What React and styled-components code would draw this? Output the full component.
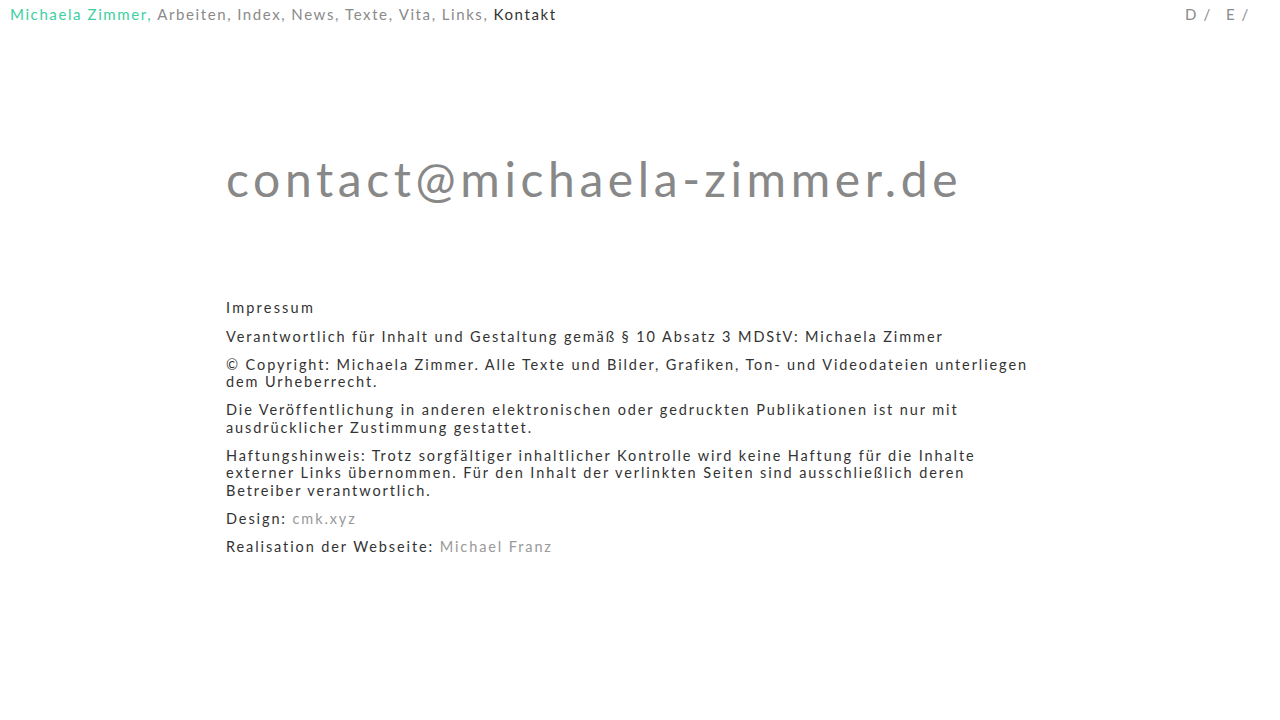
import React from 'react';
import styled, { createGlobalStyle } from 'styled-components';

const GlobalStyle = createGlobalStyle`
  html, body {
    margin: 0;
    padding: 0;
    background: #fff;
  }
  body {
    font-family: Lato, "Noto Sans", sans-serif;
    color: #333;
  }
`

const Page = styled.div`
  width: 1280px;
  min-height: 720px;
`

const TopBar = styled.header`
  display: flex;
  justify-content: space-between;
  align-items: center;
  padding: 4px 30px 0 10px;
  height: 20px;
  font-size: 15px;
  letter-spacing: 1.6px;
`

const Nav = styled.nav`
  display: flex;
  gap: 5px;
`

const NavItem = styled.a`
  color: ${(p) => (p.$brand ? '#3ccfa0' : p.$active ? '#333' : '#8a8a8a')};
  text-decoration: none;
`

const Lang = styled.div`
  display: flex;
  gap: 14px;
  color: #8a8a8a;
`

const Content = styled.main`
  padding: 138px 0 0 226px;
`

const Email = styled.h1`
  margin: 0;
  font-size: 48px;
  font-weight: 400;
  letter-spacing: 4.6px;
  line-height: 34px;
  color: #888;
`

const Section = styled.section`
  margin-top: 103px;
  width: 812px;
  font-size: 14.5px;
  letter-spacing: 1.9px;
  line-height: 17.5px;
`

const Heading = styled.h2`
  margin: 0 0 11px;
  font-size: 14.5px;
  font-weight: 400;
  letter-spacing: 2.2px;
`

const Para = styled.p`
  margin: 0 0 10.5px;
`

const Muted = styled.a`
  color: #999;
  text-decoration: none;
`

const nav = ['Arbeiten', 'Index', 'News', 'Texte', 'Vita', 'Links'];

export default function App() {
  return (
    <Page>
      <GlobalStyle />
      <TopBar>
        <Nav>
          <NavItem $brand>Michaela Zimmer,</NavItem>
          {nav.map((n) => (
            <NavItem key={n}>{n},</NavItem>
          ))}
          <NavItem $active>Kontakt</NavItem>
        </Nav>
        <Lang>
          <span>D /</span>
          <span>E /</span>
        </Lang>
      </TopBar>
      <Content>
        <Email>contact@michaela-zimmer.de</Email>
        <Section>
          <Heading>Impressum</Heading>
          <Para>Verantwortlich für Inhalt und Gestaltung gemäß § 10 Absatz 3 MDStV: Michaela Zimmer</Para>
          <Para>© Copyright: Michaela Zimmer. Alle Texte und Bilder, Grafiken, Ton- und Videodateien unterliegen dem Urheberrecht.</Para>
          <Para>Die Veröffentlichung in anderen elektronischen oder gedruckten Publikationen ist nur mit ausdrücklicher Zustimmung gestattet.</Para>
          <Para>Haftungshinweis: Trotz sorgfältiger inhaltlicher Kontrolle wird keine Haftung für die Inhalte externer Links übernommen. Für den Inhalt der verlinkten Seiten sind ausschließlich deren Betreiber verantwortlich.</Para>
          <Para>Design: <Muted>cmk.xyz</Muted></Para>
          <Para>Realisation der Webseite: <Muted>Michael Franz</Muted></Para>
        </Section>
      </Content>
    </Page>
  );
}
